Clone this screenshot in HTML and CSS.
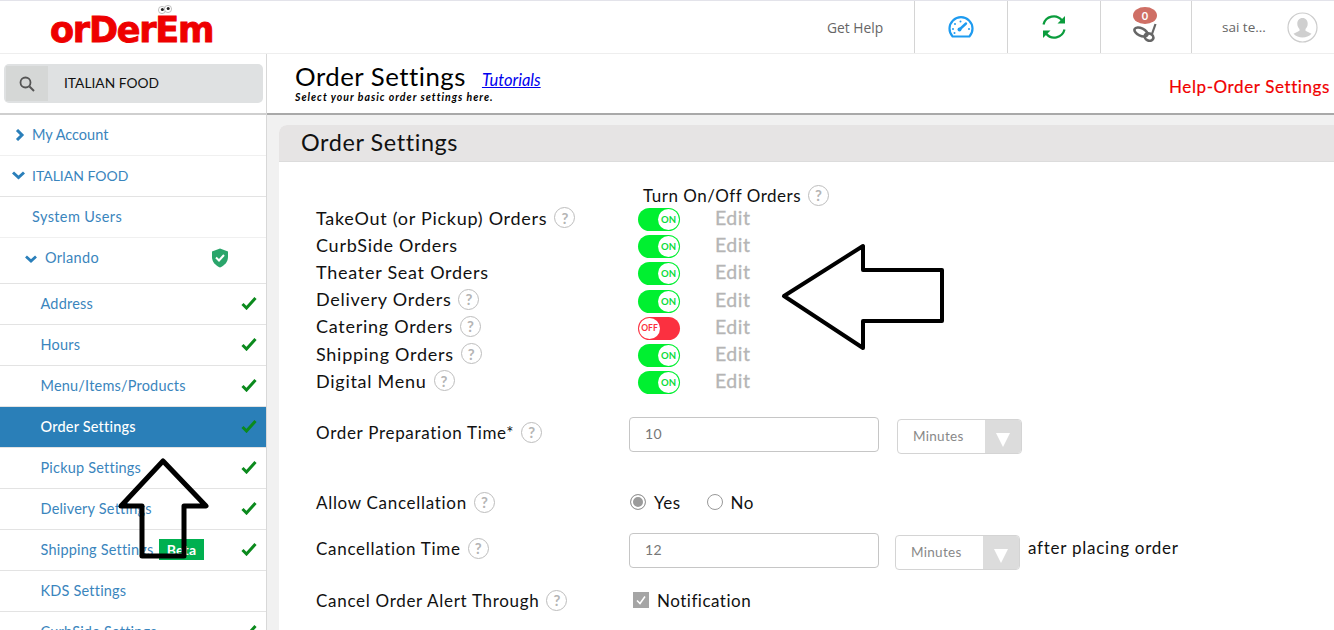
FILE: index.html
```html
<!DOCTYPE html>
<html lang="en">
<head>
<meta charset="utf-8">
<title>Order Settings</title>
<link rel="stylesheet" href="styles.css">
</head>
<body>
<header class="topbar">
  <div class="logo-cell">
    <span class="logo">orDerEm</span>
    <svg class="logo-eyes" width="14" height="12" viewBox="0 0 14 12"><circle cx="4" cy="6" r="3.6" fill="#fff" stroke="#999" stroke-width=".6"/><circle cx="10" cy="5" r="3.6" fill="#fff" stroke="#999" stroke-width=".6"/><circle cx="4.4" cy="5.6" r="1.5" fill="#222"/><circle cx="10.2" cy="4.6" r="1.5" fill="#222"/></svg>
  </div>
  <div class="top-cell top-help">Get Help</div>
  <div class="top-cell top-icon">
    <svg width="26" height="22" viewBox="0 0 26 22" fill="none"><path d="M4.6 20.5A11.5 11.5 0 1 1 21.4 20.5Z" stroke="#1e9bf0" stroke-width="2.2" stroke-linejoin="round"/><path d="M11.5 13.5 18 7.5" stroke="#1e9bf0" stroke-width="2.4" stroke-linecap="round"/><circle cx="11.5" cy="13.5" r="2" fill="#1e9bf0"/><g fill="#1e9bf0"><circle cx="5" cy="13" r="1"/><circle cx="7" cy="8" r="1"/><circle cx="12.5" cy="5.5" r="1"/><circle cx="21" cy="13" r="1"/><circle cx="6.5" cy="17" r="1"/></g></svg>
  </div>
  <div class="top-cell top-icon">
    <svg width="24" height="26" viewBox="0 0 24 26" fill="none"><path d="M1.5 10.5A10.5 10.5 0 0 1 20 6.5" stroke="#0a9c3c" stroke-width="2.2"/><path d="M22.5 15.5A10.5 10.5 0 0 1 4 19.5" stroke="#0a9c3c" stroke-width="2.2"/><path d="M15.5 9.5h7.5V2Z" fill="#0a9c3c"/><path d="M8.5 16.500H1V24Z" fill="#0a9c3c"/></svg>
  </div>
  <div class="top-cell top-icon top-orders">
    <span class="badge">0</span>
    <svg class="orders-icon" width="24" height="20" viewBox="0 0 24 20" fill="none"><ellipse cx="8" cy="9" rx="7" ry="3.800" transform="rotate(25 8 9)" stroke="#666" stroke-width="2.600"/><ellipse cx="16" cy="14" rx="4.500" ry="3.600" transform="rotate(25 16 14)" stroke="#666" stroke-width="2.600"/><path d="M22.500 1 19 11" stroke="#666" stroke-width="2.200"/></svg>
  </div>
  <div class="top-user">
    <span class="user-name">sai te...</span>
    <svg width="31" height="31" viewBox="0 0 31 31"><circle cx="15.500" cy="15.500" r="14.500" fill="#fff" stroke="#ccc" stroke-width="1.200"/><path d="M15.500 6c3.300 0 5.200 2.500 5.200 5.700 0 2.300-1 4.200-2.200 5.400v1.700l6 2.900a12.500 12.500 0 0 1-18 0l6-2.900v-1.700c-1.200-1.200-2.200-3.100-2.200-5.400C10.300 8.500 12.200 6 15.500 6Z" fill="#cfcfcf"/></svg>
  </div>
</header>

<div class="layout">
  <aside class="sidebar">
    <div class="search-wrap">
      <div class="search">
        <span class="search-icon">
          <svg width="16" height="16" viewBox="0 0 16 16" fill="none"><circle cx="6.500" cy="6.500" r="5" stroke="#555" stroke-width="1.800"/><path d="m10.500 10.500 4.500 4.500" stroke="#555" stroke-width="2"/></svg>
        </span>
        <span class="search-text">ITALIAN FOOD</span>
      </div>
    </div>
    <nav class="nav">
      <a class="nav-row lvl0"><svg class="chev" width="10" height="12" viewBox="0 0 10 12" fill="none"><path d="m2 1 5 5-5 5" stroke="#2a7fba" stroke-width="3"/></svg>My Account</a>
      <a class="nav-row lvl0 lvl0-open"><svg class="chev-down" width="13" height="9" viewBox="0 0 13 9" fill="none"><path d="m1 1.500 5.500 5 5.500-5" stroke="#2a7fba" stroke-width="3"/></svg>ITALIAN FOOD</a>
      <a class="nav-row lvl1">System Users</a>
      <a class="nav-row lvl-loc"><svg class="chev-down small" width="12" height="8" viewBox="0 0 12 8" fill="none"><path d="m1 1.500 5 4.500 5-4.500" stroke="#2a7fba" stroke-width="2.800"/></svg>Orlando
        <svg class="shield" width="18" height="20" viewBox="0 0 18 20"><path d="M9 0.500 17 3.500V9c0 5-3.500 8.500-8 10.500C4.500 17.500 1 14 1 9V3.500Z" fill="#2aa56b"/><path d="m5 9.500 3 3 5-5.500" fill="none" stroke="#fff" stroke-width="2"/></svg>
      </a>
      <a class="nav-row lvl2">Address<svg class="check" width="16" height="14" viewBox="0 0 16 14" fill="none"><path d="m1.500 8 4 4L14.500 2" stroke="#0b8a1d" stroke-width="3"/></svg></a>
      <a class="nav-row lvl2">Hours<svg class="check" width="16" height="14" viewBox="0 0 16 14" fill="none"><path d="m1.500 8 4 4L14.500 2" stroke="#0b8a1d" stroke-width="3"/></svg></a>
      <a class="nav-row lvl2">Menu/Items/Products<svg class="check" width="16" height="14" viewBox="0 0 16 14" fill="none"><path d="m1.500 8 4 4L14.500 2" stroke="#0b8a1d" stroke-width="3"/></svg></a>
      <a class="nav-row lvl2 active">Order Settings<svg class="check" width="16" height="14" viewBox="0 0 16 14" fill="none"><path d="m1.500 8 4 4L14.500 2" stroke="#0b8a1d" stroke-width="3"/></svg></a>
      <a class="nav-row lvl2">Pickup Settings<svg class="check" width="16" height="14" viewBox="0 0 16 14" fill="none"><path d="m1.500 8 4 4L14.500 2" stroke="#0b8a1d" stroke-width="3"/></svg></a>
      <a class="nav-row lvl2">Delivery Settings<svg class="check" width="16" height="14" viewBox="0 0 16 14" fill="none"><path d="m1.500 8 4 4L14.500 2" stroke="#0b8a1d" stroke-width="3"/></svg></a>
      <a class="nav-row lvl2">Shipping Settings<span class="beta">Beta</span><svg class="check" width="16" height="14" viewBox="0 0 16 14" fill="none"><path d="m1.500 8 4 4L14.500 2" stroke="#0b8a1d" stroke-width="3"/></svg></a>
      <a class="nav-row lvl2">KDS Settings</a>
      <a class="nav-row lvl2">CurbSide Settings<svg class="check" width="16" height="14" viewBox="0 0 16 14" fill="none"><path d="m1.500 8 4 4L14.500 2" stroke="#0b8a1d" stroke-width="3"/></svg></a>
    </nav>
  </aside>

  <main class="main">
    <div class="page-head">
      <div class="page-titles">
        <div class="title-line"><h1>Order Settings</h1><a class="tutorials">Tutorials</a></div>
        <p class="subtitle">Select your basic order settings here.</p>
      </div>
      <a class="help-link">Help-Order Settings</a>
    </div>
    <section class="panel">
      <h2 class="panel-title">Order Settings</h2>
      <div class="form">
        <div class="toggle-head">Turn On/Off Orders<span class="q">?</span></div>
        <div class="t-row"><span class="t-label">TakeOut (or Pickup) Orders<span class="q">?</span></span><span class="sw on"><span class="knob">ON</span></span><span class="edit">Edit</span></div>
        <div class="t-row"><span class="t-label">CurbSide Orders</span><span class="sw on"><span class="knob">ON</span></span><span class="edit">Edit</span></div>
        <div class="t-row"><span class="t-label">Theater Seat Orders</span><span class="sw on"><span class="knob">ON</span></span><span class="edit">Edit</span></div>
        <div class="t-row"><span class="t-label">Delivery Orders<span class="q">?</span></span><span class="sw on"><span class="knob">ON</span></span><span class="edit">Edit</span></div>
        <div class="t-row"><span class="t-label">Catering Orders<span class="q">?</span></span><span class="sw off"><span class="knob">OFF</span></span><span class="edit">Edit</span></div>
        <div class="t-row"><span class="t-label">Shipping Orders<span class="q">?</span></span><span class="sw on"><span class="knob">ON</span></span><span class="edit">Edit</span></div>
        <div class="t-row"><span class="t-label">Digital Menu<span class="q">?</span></span><span class="sw on"><span class="knob">ON</span></span><span class="edit">Edit</span></div>

        <div class="f-row prep">
          <span class="f-label">Order Preparation Time*<span class="q">?</span></span>
          <span class="input">10</span>
          <span class="select sel-a"><span class="sel-text">Minutes</span><span class="sel-btn"></span></span>
        </div>
        <div class="f-row allow">
          <span class="f-label">Allow Cancellation<span class="q">?</span></span>
          <span class="radios"><span class="radio checked"></span><span class="r-text">Yes</span><span class="radio"></span><span class="r-text">No</span></span>
        </div>
        <div class="f-row cancel">
          <span class="f-label">Cancellation Time<span class="q">?</span></span>
          <span class="input">12</span>
          <span class="select sel-b"><span class="sel-text">Minutes</span><span class="sel-btn"></span></span>
          <span class="after">after placing order</span>
        </div>
        <div class="f-row alert">
          <span class="f-label">Cancel Order Alert Through<span class="q">?</span></span>
          <span class="checks"><span class="checkbox"><svg width="16" height="16" viewBox="0 0 16 16" fill="none"><path d="m4 8.500 3 3 5-7" stroke="#fff" stroke-width="1.500"/></svg></span>Notification</span>
        </div>
      </div>
    </section>
  </main>
</div>

<svg class="arrow arrow-left" width="164" height="108" viewBox="0 0 164 108" fill="none"><path d="M82 3V27H161V78H82V105L3 53Z" stroke="#000" stroke-width="4" stroke-linejoin="round"/></svg>
<svg class="arrow arrow-up" width="92" height="102" viewBox="0 0 92 102" fill="none"><path d="M45 3 88 48H66V98H24V48H3Z" stroke="#000" stroke-width="5" stroke-linejoin="round"/></svg>
</body>
</html>
```

FILE: styles.css
```css
* { box-sizing: border-box; }
html, body { margin: 0; padding: 0; height: 630px; overflow: hidden; background: #fff; }
body { position: relative; font-family: "Lato", "Open Sans", sans-serif; color: #111; }

.topbar { display: flex; height: 54px; border-top: 1px solid #e3e3ea; border-bottom: 1px solid #eee; background: #fff; }
.logo-cell { width: 914px; position: relative; padding-left: 50px; }
.logo { display: inline-block; font-family: "DejaVu Sans", sans-serif; font-weight: 700; font-size: 35px; line-height: 58px; letter-spacing: -1.200px; color: #ee0000; -webkit-text-stroke: .9px #ee0000; }
.logo-eyes { position: absolute; left: 158px; top: 3px; }
.top-cell { display: flex; align-items: center; justify-content: center; height: 52px; }
.top-help { position: absolute; left: 827px; top: 1px; font-family: "Open Sans", sans-serif; font-size: 13.800px; color: #666; }
.top-icon { width: 93px; border-left: 1px solid #d4d4d4; }
.top-orders { position: relative; width: 91px; }
.badge { position: absolute; left: 32px; top: 6px; width: 24px; height: 17px; border-radius: 50%; background: #cf6f65; color: #fff; font-size: 11px; font-weight: 700; text-align: center; line-height: 17px; }
.orders-icon { margin-top: 11px; margin-left: -2px; }
.top-user { flex: 1; display: flex; align-items: center; height: 52px; border-left: 1px solid #d4d4d4; padding-left: 30px; gap: 19px; font-family: "Open Sans", sans-serif; font-size: 13.500px; color: #666; }
.user-name { width: 46px; white-space: nowrap; }

.layout { display: flex; height: 576px; }
.sidebar { width: 267px; flex: none; border-right: 1px solid #d8d8d8; font-size: 14.500px; }
.search-wrap { height: 61px; padding: 10px 3px 0 4px; border-bottom: 2px solid #cfcfcf; }
.search { display: flex; height: 39px; padding: 2px; align-items: stretch; background: #dfe1e2; border-radius: 5px; }
.search-icon { width: 42px; display: flex; align-items: center; justify-content: center; background: #d5d7d6; }
.search-text { padding-left: 16px; font-size: 13.800px; line-height: 33px; color: #111; }
.nav-row { position: relative; display: flex; align-items: center; height: 41px; padding-bottom: 2px; border-bottom: 1px solid #e3e3e3; color: #3a85bd; white-space: nowrap; }
.lvl0 { padding-left: 32px; border-bottom-color: #f0f0f0; }
.lvl0-open { border-bottom-color: #e3e3e3; font-size: 14px; }
.chev { position: absolute; left: 15px; top: 14px; }
.chev-down { position: absolute; left: 12px; top: 15px; }
.chev-down.small { left: 25px; top: 17px; }
.lvl1 { padding-left: 32px; border-bottom-color: #f0f0f0; letter-spacing: .4px; }
.lvl-loc { height: 46px; padding: 0 0 7px 45px; letter-spacing: .3px; }
.shield { position: absolute; left: 211px; top: 10px; }
.lvl2 { padding-left: 40.500px; letter-spacing: .2px; }
.check { position: absolute; left: 241px; top: 12px; }
.active { background: #2a7fb8; color: #fff; font-weight: 500; }
.beta { position: absolute; left: 159px; top: 9px; width: 45px; height: 21px; background: #00b050; color: #fff; font-weight: 700; font-size: 14px; text-align: center; line-height: 21px; }

.main { flex: 1; min-width: 0; background: #f1f1f1; }
.page-head { display: flex; justify-content: space-between; height: 61px; padding: 8px 4px 0 28px; background: #fff; border-bottom: 2px solid #a9a9a9; }
.title-line { display: flex; align-items: baseline; gap: 16px; }
h1 { margin: 0; font-size: 25.800px; line-height: 28px; font-weight: 400; color: #000; letter-spacing: .500px; }
.tutorials { font-size: 16.500px; font-style: italic; color: #0000ee; text-decoration: underline; }
.subtitle { margin: 1px 0 0; font-size: 10.500px; line-height: 12px; font-style: italic; font-weight: 700; letter-spacing: 1px; color: #000; }
.help-link { margin-top: 14px; font-size: 17px; color: #f00000; letter-spacing: .600px; -webkit-text-stroke: .2px #f00000; }

.panel { margin: 10px 0 0 12px; height: 510px; background: #fff; border-top-left-radius: 8px; overflow: hidden; }
.panel-title { margin: 0; height: 37px; padding-left: 22px; background: #e6e4e4; font-size: 23.400px; line-height: 35px; font-weight: 400; color: #111; letter-spacing: .600px; border-bottom: 1px solid #dcdcdc; }
.form { padding: 23px 0 0 37px; font-size: 17px; letter-spacing: .500px; color: #111; }
.q { display: inline-flex; align-items: center; justify-content: center; flex: none; width: 21px; height: 21px; margin-left: 7px; border: 1.500px solid #bdbdbd; border-radius: 50%; font-size: 15px; font-weight: 700; color: #b5b5b5; letter-spacing: 0; }
.toggle-head { display: flex; align-items: center; height: 20px; padding-left: 327px; }
.t-row { display: flex; align-items: center; height: 27.200px; }
.t-label { width: 322px; flex: none; display: flex; align-items: center; margin-bottom: 2px; font-size: 18px; letter-spacing: .730px; }
.sw { display: flex; align-items: center; width: 42px; height: 23px; flex: none; padding: 1px; margin-top: 2px; border-radius: 12px; }
.sw.on { background: #00f030; justify-content: flex-end; }
.sw.off { background: #fb3040; justify-content: flex-start; }
.knob { width: 21px; height: 21px; border-radius: 50%; background: #fff; font-size: 9.500px; font-weight: 700; text-align: center; line-height: 21px; letter-spacing: 0; }
.on .knob { color: #0bdc3a; }
.off .knob { color: #fb3040; font-size: 8.500px; }
.edit { margin: 0 0 2px 35px; font-size: 19.500px; color: #b5b5b5; -webkit-text-stroke: .3px #b5b5b5; }

.f-row { display: flex; align-items: flex-start; }
.f-label { width: 313px; flex: none; display: flex; align-items: center; height: 30px; letter-spacing: .7px; }
.input { width: 250px; height: 35px; flex: none; border: 1px solid #c6c6c6; border-radius: 4px; padding-left: 15px; font-size: 14px; line-height: 32px; color: #777; }
.select { display: flex; height: 35px; width: 125px; flex: none; border: 1px solid #d4d4d4; border-radius: 4px; font-size: 13.500px; line-height: 32px; letter-spacing: .3px; color: #888; overflow: hidden; }
.sel-a { margin: 2px 0 0 18px; }
.sel-b { margin: 2px 0 0 16px; }
.sel-text { flex: 1; padding-left: 15px; }
.sel-btn { position: relative; width: 36px; background: #dcdcdc; }
.sel-btn::after { content: ""; position: absolute; left: 11px; top: 13px; border-left: 7px solid transparent; border-right: 7px solid transparent; border-top: 14px solid #fff; }
.prep { margin-top: 22px; height: 70px; }
.allow { height: 46px; }
.radios { display: flex; align-items: center; height: 30px; padding-left: 1px; }
.radio { width: 16px; height: 16px; border: 1.500px solid #999; border-radius: 50%; background: #fff; flex: none; }
.radio.checked { background: #9a9a9a; box-shadow: inset 0 0 0 2px #fff; }
.r-text { margin: 0 26px 0 8px; }
.cancel { height: 52px; }
.after { margin: 1px 0 0 8px; line-height: 28px; letter-spacing: .75px; }
.checks { display: flex; align-items: center; gap: 8px; height: 30px; padding-left: 4px; }
.checkbox { display: block; width: 16px; height: 16px; background: #a5a5a5; }
.checkbox svg { display: block; }

.arrow { position: absolute; }
.arrow-left { left: 781px; top: 243px; }
.arrow-up { left: 118px; top: 458px; }
```
